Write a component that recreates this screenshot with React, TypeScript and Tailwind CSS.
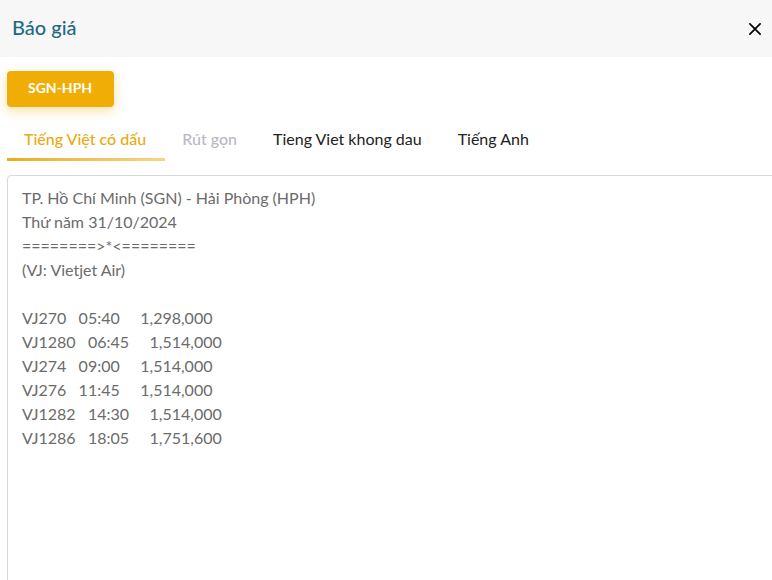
import { useState } from "react";

const tabs = [
  { label: "Tiếng Việt có dấu" },
  { label: "Rút gọn", disabled: true },
  { label: "Tieng Viet khong dau" },
  { label: "Tiếng Anh" },
];

const quote = `TP. Hồ Chí Minh (SGN) - Hải Phòng (HPH)
Thứ năm 31/10/2024
========>*<========
(VJ: Vietjet Air)

VJ270   05:40     1,298,000
VJ1280   06:45     1,514,000
VJ274   09:00     1,514,000
VJ276   11:45     1,514,000
VJ1282   14:30     1,514,000
VJ1286   18:05     1,751,600`;

function tabColor(active: boolean, disabled?: boolean) {
  if (active) return "font-medium text-[#eaab10]";
  if (disabled) return "font-medium text-[#b9b9c3]";
  return "text-[#222]";
}

export default function App() {
  const [active, setActive] = useState(0);
  return (
    <main className="flex h-screen flex-col overflow-hidden bg-white font-['Lato',sans-serif] text-base">
      <header className="flex h-[57px] shrink-0 items-center justify-between bg-[#f7f7f7] pr-[7px] pl-3">
        <h1 className="pb-1 text-xl leading-7 font-medium text-[#1f6a84]">Báo giá</h1>
        <button type="button" aria-label="Đóng" className="p-1">
          <svg className="size-3" viewBox="0 0 12 12" fill="none" stroke="#000" strokeWidth="1.7" strokeLinecap="round">
            <path d="M.9.9 11.1 11.1M11.1.9.9 11.1" />
          </svg>
        </button>
      </header>
      <div className="flex shrink-0 pt-[14px] pl-[7px]">
        <button
          type="button"
          className="h-9 rounded bg-[#f0ad05] pr-[22px] pb-0.5 pl-[21px] text-sm font-bold text-white shadow-[0_4px_12px_rgba(240,173,5,0.35)]"
        >
          SGN-HPH
        </button>
      </div>
      <div role="tablist" className="mt-[13px] flex shrink-0 pl-[7px]">
        {tabs.map((tab, i) => (
          <button
            key={tab.label}
            type="button"
            role="tab"
            aria-selected={active === i}
            disabled={tab.disabled}
            onClick={() => setActive(i)}
            className={`flex flex-col whitespace-nowrap ${tabColor(active === i, tab.disabled)}`}
          >
            <span className="py-[7px] pr-[19px] pl-[17px] leading-6">{tab.label}</span>
            <span
              className={`h-[3px] w-full ${active === i ? "bg-linear-to-r from-[#e9ad14] to-[#f6d486]" : ""}`}
            />
          </button>
        ))}
      </div>
      <textarea
        aria-label="Nội dung báo giá"
        defaultValue={quote}
        className="mt-[14px] -mr-3 -mb-3 ml-[7px] min-h-0 flex-1 rounded border border-[#d8d6de] px-[14px] py-[10px] leading-6 text-[#6b6b6b] outline-none"
      />
    </main>
  );
}
